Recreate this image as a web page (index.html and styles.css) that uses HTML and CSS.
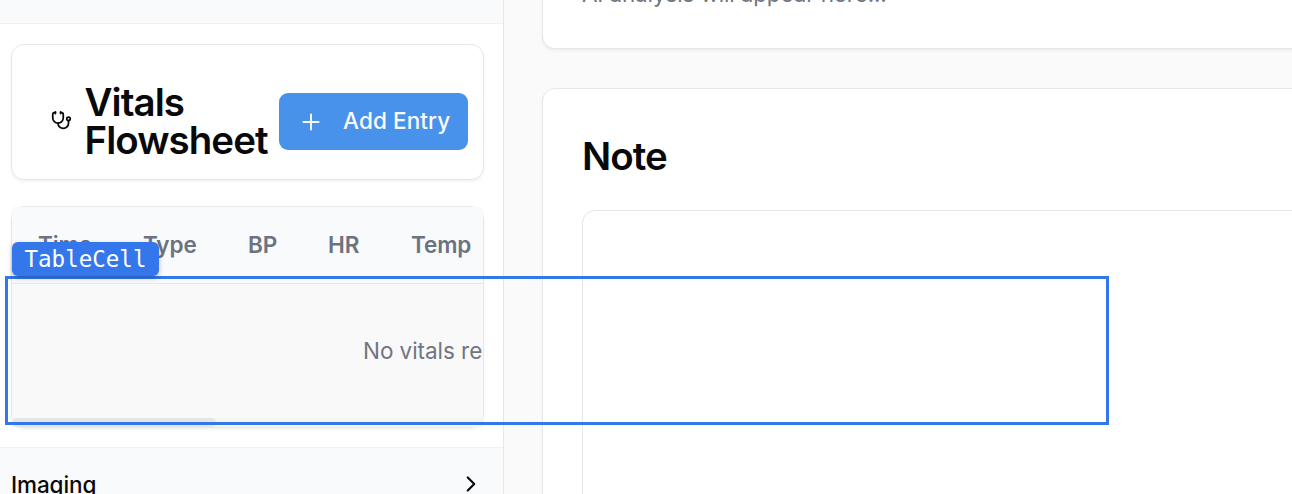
FILE: index.html
```html
<!DOCTYPE html>
<html lang="en">
<head>
<meta charset="utf-8">
<title>Vitals Flowsheet</title>
<link rel="stylesheet" href="styles.css">
</head>
<body>
<div class="app">
  <aside class="sidebar">
    <div class="section-top"></div>
    <div class="section-body">
      <section class="card vitals">
        <svg class="steth" viewBox="0 0 24 24"><path d="M11 2v2"/><path d="M5 2v2"/><path d="M5 3H4a2 2 0 0 0-2 2v4a6 6 0 0 0 12 0V5a2 2 0 0 0-2-2h-1"/><path d="M8 15a6 6 0 0 0 12 0v-3"/><circle cx="20" cy="10" r="2"/></svg>
        <h2 class="title vitals-title">Vitals<br>Flowsheet</h2>
        <button class="add"><svg class="plus" viewBox="0 0 24 24"><path d="M5 12h14M12 5v14"/></svg><span>Add Entry</span></button>
      </section>
      <section class="table">
        <div class="thead">
          <span class="c-time">Time</span><span class="c-type">Type</span><span class="c-bp">BP</span><span class="c-hr">HR</span><span>Temp</span>
        </div>
        <div class="empty">No vitals recorded</div>
        <div class="track"><div class="thumb"></div></div>
      </section>
    </div>
    <div class="section-imaging">
      <span>Imaging</span>
      <svg class="chevron" viewBox="0 0 24 24"><path d="m9 18 6-6-6-6"/></svg>
    </div>
  </aside>
  <main class="main">
    <section class="card analysis"><p>AI analysis will appear here...</p></section>
    <section class="card note">
      <h2 class="title">Note</h2>
      <div class="editor"></div>
    </section>
  </main>
  <div class="highlight"><span class="tag">TableCell</span></div>
</div>
</body>
</html>
```
FILE: styles.css
```css
* { box-sizing: border-box; }
body { margin: 0; font-family: Inter, "Liberation Sans", sans-serif; color: #09090b; overflow: hidden; }
.app { position: relative; display: flex; width: 1292px; height: 494px; background: #fafafa; overflow: hidden; }
.sidebar { width: 504px; flex: none; display: flex; flex-direction: column; border-right: 1px solid #e5e7eb; background: #fff; }
.section-top { height: 24px; flex: none; background: #f9fafb; border-bottom: 1px solid #f0f1f3; }
.section-body { height: 423px; flex: none; padding: 20px 19px 0 11px; }
.card { background: #fff; border: 1px solid #e5e7eb; border-radius: 13px; box-shadow: 0 2px 3px rgba(0, 0, 0, .05); }
.title { margin: 0; font-size: 38.5px; line-height: 38px; font-weight: 600; letter-spacing: -.96px; }
.vitals { height: 136px; display: flex; align-items: flex-start; padding-left: 39px; }
.steth { width: 21px; height: 21px; margin-top: 65px; flex: none; }
.steth, .chevron, .plus { fill: none; stroke: currentColor; stroke-width: 2; stroke-linecap: round; stroke-linejoin: round; }
.vitals-title { width: 207px; flex: none; margin-top: 38px; padding-left: 12.5px; }
.add { width: 189px; height: 57px; flex: none; margin: 48px 0 0; padding: 0 0 0 19px; border: 0; border-radius: 9px; background: #4892eb; color: #fafafa; display: flex; align-items: center; gap: 19px; font: 500 22.5px/32px Inter, "Liberation Sans", sans-serif; white-space: nowrap; }
.add span { font-weight: 450; letter-spacing: .1px; margin-top: -1px; }
.plus { width: 26px; height: 26px; stroke-width: 1.8; }
.table { height: 222px; margin-top: 26px; border: 1px solid #e5e7eb; border-radius: 13px; box-shadow: 0 2px 3px rgba(0, 0, 0, .05); }
.thead { height: 77px; display: flex; align-items: center; padding: 0 0 2px 26px; background: #f9fafb; border-bottom: 1px solid #e5e7eb; color: #6b7280; font-size: 22.5px; font-weight: 600; letter-spacing: -.1px; }
.c-time { width: 105px; }
.c-type { width: 105px; }
.c-bp { width: 80px; }
.c-hr { width: 83px; }
.empty { height: 134px; padding: 0 0 0 351px; background: #f9f9f9; color: #71757f; font-size: 22.5px; line-height: 133px; letter-spacing: -.05px; white-space: nowrap; overflow: hidden; }
.track { height: 9px; background: #f5f5f6; }
.thumb { width: 204px; height: 9px; border-radius: 5px; background: #e5e5e8; }
.section-imaging { height: 73px; flex: none; display: flex; align-items: center; justify-content: space-between; padding: 0 19px 0 11px; background: #f9fafb; border-top: 1px solid #eff0f2; font-size: 22.5px; font-weight: 500; letter-spacing: -.1px; }
.chevron { width: 26px; height: 26px; }
.main { flex: none; width: 900px; padding-left: 38px; }
.analysis { height: 49px; border-top: 0; border-radius: 0 0 13px 13px; padding-left: 39px; overflow: hidden; }
.analysis p { margin: -22px 0 0; font-size: 22.5px; line-height: 32px; color: #71757f; letter-spacing: -.15px; }
.note { height: 500px; margin-top: 39px; padding: 48px 39px 0; }
.editor { height: 400px; margin-top: 35px; border: 1px solid #e5e7eb; border-radius: 13px; }
.highlight { position: absolute; left: 5px; top: 276px; width: 1104px; height: 149px; border: 3px solid #3477eb; }
.tag { position: absolute; left: 4px; top: -37px; width: 147px; height: 34px; border-radius: 6px; background: #3477eb; color: #fff; text-align: center; font: 22.5px/34px "DejaVu Sans Mono", monospace; box-shadow: 0 2px 5px rgba(0, 0, 0, .25); }
```
